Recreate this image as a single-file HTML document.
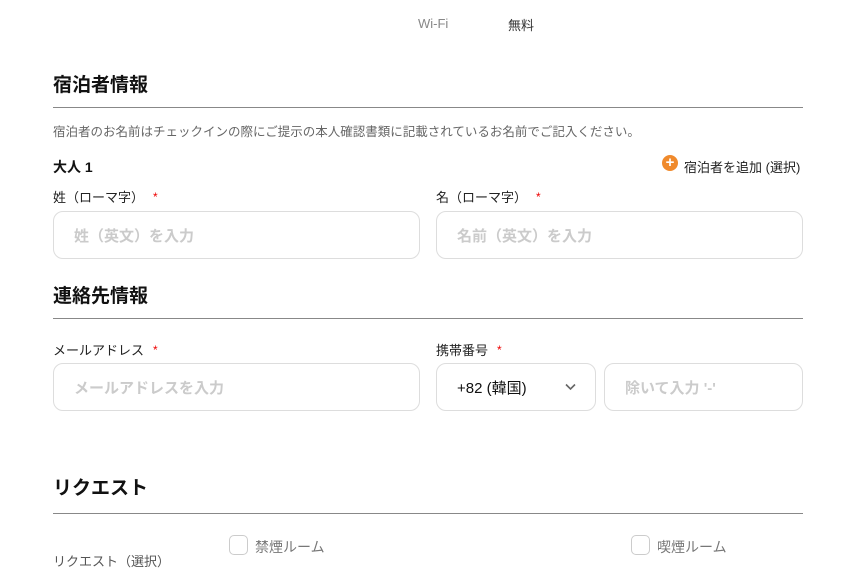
<!DOCTYPE html>
<html><head><meta charset="utf-8"><style>
body{margin:0;width:842px;height:567px;overflow:hidden;background:#fff;font-family:"Liberation Sans","Noto Sans CJK JP",sans-serif;position:relative;color:#111}
.a{position:absolute;white-space:nowrap}
.h{font-size:19px;font-weight:bold;color:#111}
.hr{position:absolute;left:53px;width:750px;height:1px;background:#888}
.lb{font-size:13px;color:#222}
.st{color:#e00;font-size:12px;margin-left:9px;position:relative;top:-1px}
.in{position:absolute;border:1px solid #ddd;border-radius:10px;height:46px;box-sizing:border-box;font-size:15px;color:#cbcbcb;padding:13px 0 0 20px;font-weight:bold}
.cb{position:absolute;width:19px;height:20px;border:1px solid #ccc;border-radius:5px;box-sizing:border-box}
</style></head><body>
<div class="a" style="left:418px;top:16px;font-size:13px;color:#888">Wi-Fi</div>
<div class="a" style="left:508px;top:15px;font-size:13px;color:#333">無料</div>

<div class="a h" style="left:53px;top:70px">宿泊者情報</div>
<div class="hr" style="top:107px"></div>
<div class="a" style="left:53px;top:121px;font-size:12.5px;color:#666">宿泊者のお名前はチェックインの際にご提示の本人確認書類に記載されているお名前でご記入ください。</div>
<div class="a" style="left:53px;top:157px;font-size:14px;font-weight:bold">大人 1</div>
<div class="a" style="left:662px;top:155px;width:16px;height:16px;border-radius:50%;background:#f08a2c;color:#fff;font-size:15px;line-height:15px;text-align:center;font-weight:bold">+</div>
<div class="a" style="left:684px;top:157px;font-size:13px;color:#222">宿泊者を追加 (選択)</div>

<div class="a lb" style="left:53px;top:187px">姓（ローマ字）<span class="st">*</span></div>
<div class="a lb" style="left:436px;top:187px">名（ローマ字）<span class="st">*</span></div>
<div class="in" style="left:53px;top:211px;width:367px;height:48px">姓（英文）を入力</div>
<div class="in" style="left:436px;top:211px;width:367px;height:48px">名前（英文）を入力</div>

<div class="a h" style="left:53px;top:281px">連絡先情報</div>
<div class="hr" style="top:318px"></div>
<div class="a lb" style="left:53px;top:340px">メールアドレス<span class="st">*</span></div>
<div class="a lb" style="left:436px;top:340px">携帯番号<span class="st">*</span></div>
<div class="in" style="left:53px;top:363px;width:367px;height:48px">メールアドレスを入力</div>
<div class="in" style="left:436px;top:363px;width:160px;height:48px;color:#111;font-weight:normal;font-size:15px">+82 (韓国)
<svg style="position:absolute;left:128px;top:19px" width="11" height="8" viewBox="0 0 11 8"><path d="M1 1.5 L5.5 6 L10 1.5" fill="none" stroke="#666" stroke-width="1.6"/></svg></div>
<div class="in" style="left:604px;top:363px;width:199px;height:48px">除いて入力 '-'</div>

<div class="a h" style="left:53px;top:473px">リクエスト</div>
<div class="hr" style="top:513px"></div>
<div class="a" style="left:53px;top:551px;font-size:13px;color:#555">リクエスト（選択）</div>
<div class="cb" style="left:229px;top:535px"></div>
<div class="a" style="left:255px;top:537px;font-size:14px;color:#777">禁煙ルーム</div>
<div class="cb" style="left:631px;top:535px"></div>
<div class="a" style="left:657px;top:537px;font-size:14px;color:#777">喫煙ルーム</div>
</body></html>
